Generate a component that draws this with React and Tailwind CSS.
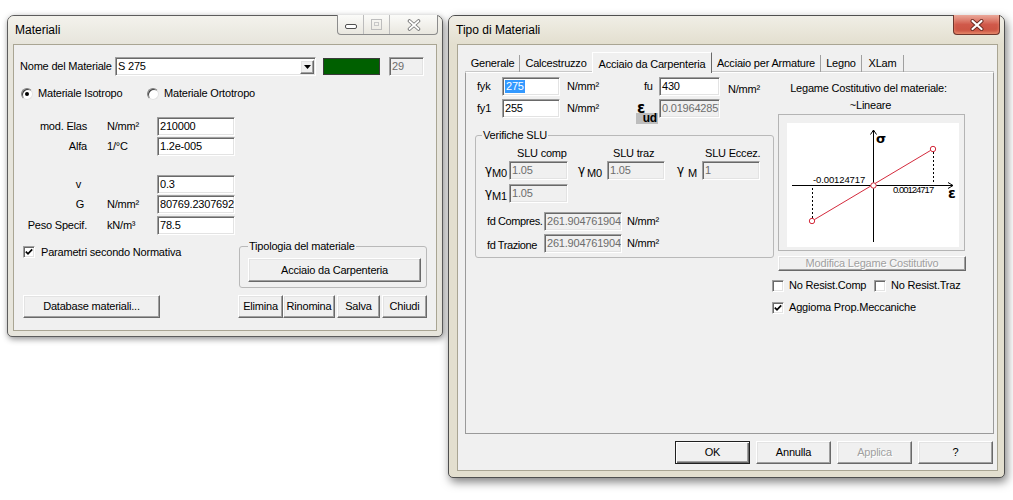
import React from 'react';

const sunken =
  'border border-t-[#a0a0a0] border-l-[#a0a0a0] border-r-[#ffffff] border-b-[#ffffff] shadow-[inset_1px_1px_0_#696969,inset_-1px_-1px_0_#e3e3e3]';
const raised =
  'bg-[#f0f0f0] border border-t-[#ffffff] border-l-[#ffffff] border-r-[#696969] border-b-[#696969] shadow-[inset_-1px_-1px_0_#a0a0a0,inset_1px_1px_0_#e3e3e3]';

function Edit({ className = '', disabled, children }) {
  return (
    <div
      className={`${sunken} ${disabled ? 'bg-[#f0f0f0] text-[#6d6d6d]' : 'bg-white'} flex items-center h-[19px] pl-[2px] overflow-hidden whitespace-nowrap shrink-0 ${className}`}
    >
      {children}
    </div>
  );
}

function Btn({ className = '', disabled, children }) {
  return (
    <div
      className={`${raised} flex items-center justify-center shrink-0 whitespace-nowrap ${disabled ? 'text-[#a0a0a0] [text-shadow:1px_1px_0_#ffffff]' : ''} ${className}`}
    >
      {children}
    </div>
  );
}

function DefaultBtn({ className = '', children }) {
  return (
    <div
      className={`bg-[#f0f0f0] border border-[#202020] shadow-[inset_1px_1px_0_#ffffff,inset_-1px_-1px_0_#696969,inset_-2px_-2px_0_#a0a0a0] flex items-center justify-center shrink-0 ${className}`}
    >
      {children}
    </div>
  );
}

function Check({ checked }) {
  return (
    <div className={`${sunken} bg-white w-[12px] h-[12px] flex items-center justify-center shrink-0`}>
      {checked && (
        <svg width="8" height="8" viewBox="0 0 8 8">
          <path d="M0.8 3.6 L3 5.8 L7.2 1.4" fill="none" stroke="#000" strokeWidth="1.7" />
        </svg>
      )}
    </div>
  );
}

function Radio({ checked }) {
  return (
    <div className="w-[12px] h-[12px] rounded-full border border-t-[#808080] border-l-[#808080] border-r-[#e3e3e3] border-b-[#e3e3e3] bg-white shadow-[inset_1px_1px_0_#404040] flex items-center justify-center shrink-0">
      {checked && <div className="w-[4px] h-[4px] rounded-full bg-black" />}
    </div>
  );
}

function Gamma({ sub, className = '', gap = '' }) {
  return (
    <div className={`flex items-start shrink-0 ${className}`}>
      <span className="text-[12px] leading-[13px] font-['DejaVu_Sans',sans-serif] tracking-normal">γ</span>
      <span className={`translate-y-[3px] leading-[13px] ${gap}`}>{sub}</span>
    </div>
  );
}

function Row({ label, unit, value, className = '', labelPad = '' }) {
  return (
    <div className={`flex items-center h-[19px] ${className}`}>
      <span className={`w-[67px] text-right ${labelPad}`}>{label}</span>
      <span className="w-[70px] pl-[20px]">{unit}</span>
      <Edit className="w-[78px]">{value}</Edit>
    </div>
  );
}

function LeftWindow() {
  return (
    <div className="absolute left-[7px] top-[15px] w-[436px] h-[322px] flex flex-col rounded-t-[7px] rounded-b-[5px] border border-[#5c5c5c] bg-[#e7e5dc] shadow-[1px_2px_6px_rgba(0,0,0,0.45)]">
      <div className="flex h-[28px] pl-[7px] pr-[4px] rounded-t-[6px] bg-linear-to-b from-[#f3f2ec] to-[#e7e5dc]">
        <span className="self-center text-[12px] tracking-normal pt-[1px]">Materiali</span>
        <div className="flex-1" />
        <div className="self-start -mt-px flex h-[20px] border border-t-0 border-[#8c8c8c] rounded-b-[4px] overflow-hidden bg-linear-to-b from-[#fbfbf9] to-[#e9e7df]">
          <div className="w-[26px] flex items-center justify-center border-r border-[#bcbcbc] pt-[4px]">
            <svg width="12" height="6">
              <rect x="0.5" y="0.5" width="11" height="4" rx="1.5" fill="#fff" stroke="#505050" />
            </svg>
          </div>
          <div className="w-[26px] flex items-center justify-center border-r border-[#bcbcbc]">
            <svg width="11" height="11">
              <rect x="0.5" y="0.5" width="10" height="10" fill="none" stroke="#bdbdbd" />
              <rect x="3.5" y="3.5" width="4" height="3" fill="none" stroke="#c8c8c8" />
            </svg>
          </div>
          <div className="w-[47px] flex items-center justify-center">
            <svg width="14" height="12">
              <path d="M2.5 2 L11.5 10 M11.5 2 L2.5 10" stroke="#7a7a7a" strokeWidth="3.6" strokeLinecap="round" />
              <path d="M2.5 2 L11.5 10 M11.5 2 L2.5 10" stroke="#fff" strokeWidth="1.7" strokeLinecap="round" />
            </svg>
          </div>
        </div>
      </div>

      <div className="mx-[5px] h-[287px] border border-[#a9a593] bg-[#f0f0f0] pl-[6px] pt-[12px] flex flex-col">
        <div className="flex items-center h-[19px]">
          <span className="w-[95px]">Nome del Materiale</span>
          <div className={`${sunken} bg-white w-[201px] h-[19px] flex items-center pl-[2px] pr-[1px]`}>
            <span className="flex-1">S 275</span>
            <div className={`${raised} w-[14px] h-[14px] flex items-center justify-center`}>
              <svg width="7" height="4">
                <path d="M0 0 L7 0 L3.5 4 Z" fill="#000" />
              </svg>
            </div>
          </div>
          <div className="ml-[7px] w-[57px] h-[17px] bg-[#006000] border border-[#3a3a3a]" />
          <Edit disabled className="ml-[9px] w-[35px]">
            29
          </Edit>
        </div>

        <div className="flex items-center h-[13px] mt-[11px] pl-[1px]">
          <div className="flex items-center w-[126px] gap-[5px]">
            <Radio checked />
            <span>Materiale Isotropo</span>
          </div>
          <div className="flex items-center gap-[5px]">
            <Radio />
            <span>Materiale Ortotropo</span>
          </div>
        </div>

        <div className="mt-[17px] flex flex-col">
          <Row label="mod. Elas" unit="N/mm²" value="210000" />
          <Row label="Alfa" unit="1/°C" value="1.2e-005" className="mt-[1px]" />
          <Row label="v" unit="" value="0.3" className="mt-[19px]" labelPad="pr-[6px]" />
          <Row label="G" unit="N/mm²" value="80769.2307692" className="mt-[1px]" labelPad="pr-[3px]" />
          <Row label="Peso Specif." unit="kN/m³" value="78.5" className="mt-[2px]" />
        </div>

        <div className="flex mt-[5px]">
          <div className="flex items-start pt-[6px] pl-[3px] w-[219px] shrink-0">
            <Check checked />
            <span className="ml-[6px] leading-[12px]">Parametri secondo Normativa</span>
          </div>
          <fieldset className="w-[188px] border border-[#b9b9b9] rounded-[3px] pl-[8px] pr-[5px] pb-[5px] shrink-0">
            <legend className="px-[1px] leading-[13px]">Tipologia del materiale</legend>
            <Btn className="mt-[5px] w-[173px] h-[24px]">Acciaio da Carpenteria</Btn>
          </fieldset>
        </div>

        <div className="flex mt-[7px] h-[23px]">
          <Btn className="ml-[3px] w-[137px]">Database materiali...</Btn>
          <Btn className="ml-[78px] w-[45px]">Elimina</Btn>
          <Btn className="w-[52px]">Rinomina</Btn>
          <Btn className="ml-[2px] w-[43px]">Salva</Btn>
          <Btn className="ml-[2px] w-[45px]">Chiudi</Btn>
        </div>
      </div>
    </div>
  );
}

function Chart() {
  const red = '#d42a3c';
  return (
    <svg width="172" height="124" className="block">
      <line x1="5" y1="62.5" x2="166" y2="62.5" stroke="#000" />
      <polyline points="161,59.5 166,62.5 161,65.5" fill="none" stroke="#000" />
      <line x1="86.5" y1="7" x2="86.5" y2="119" stroke="#000" />
      <polyline points="83.5,11.5 86.5,7 89.5,11.5" fill="none" stroke="#000" />
      <text x="89" y="20" fontSize="13" fontWeight="bold" fontFamily="DejaVu Sans, sans-serif">
        σ
      </text>
      <text x="161" y="75" fontSize="14" fontWeight="bold" fontFamily="DejaVu Sans, sans-serif">
        ε
      </text>
      <line x1="25.5" y1="65" x2="25.5" y2="96" stroke="#000" strokeDasharray="2 2" />
      <line x1="146.5" y1="29" x2="146.5" y2="60" stroke="#000" strokeDasharray="2 2" />
      <line x1="25" y1="98" x2="146" y2="26" stroke={red} />
      <circle cx="25" cy="98" r="2.7" fill="#fff" stroke={red} />
      <circle cx="86.5" cy="62.5" r="2.7" fill="#fff" stroke={red} />
      <circle cx="146" cy="26" r="2.7" fill="#fff" stroke={red} />
      <text x="26" y="60" fontSize="9.5" textLength="52" fontFamily="Liberation Sans, sans-serif">
        -0.00124717
      </text>
      <text x="106" y="70" fontSize="9.5" textLength="41" fontFamily="Liberation Sans, sans-serif">
        0.00124717
      </text>
    </svg>
  );
}

function RightWindow() {
  return (
    <div className="absolute left-[448px] top-[15px] w-[557px] h-[463px] flex flex-col rounded-t-[7px] rounded-b-[5px] border border-[#4f4f4f] bg-[#e3dfcf] shadow-[2px_4px_10px_rgba(0,0,0,0.5)]">
      <div className="flex h-[28px] pl-[7px] pr-[4px] rounded-t-[6px] bg-linear-to-b from-[#f0eee6] to-[#e3dfcf]">
        <span className="self-center text-[12px] tracking-normal pt-[1px]">Tipo di Materiali</span>
        <div className="flex-1" />
        <div className="self-start -mt-px w-[47px] h-[20px] border border-t-0 border-[#6e362d] rounded-b-[4px] bg-linear-to-b from-[#eaa99b] via-[#d0594a] to-[#c9513f] flex items-center justify-center shadow-[inset_0_-2px_3px_rgba(255,190,150,0.5)]">
          <svg width="14" height="12">
            <path d="M2.5 2 L11.5 10 M11.5 2 L2.5 10" stroke="#6a2a22" strokeWidth="4" strokeLinecap="round" />
            <path d="M2.5 2 L11.5 10 M11.5 2 L2.5 10" stroke="#fff" strokeWidth="2.2" strokeLinecap="round" />
          </svg>
        </div>
      </div>

      <div className="ml-[8px] w-[541px] h-[427px] border border-[#a9a593] bg-[#f0f0f0] flex flex-col">
        <div className="flex items-end ml-[8px] mt-[7px] relative z-10">
          <div className="w-[54px] h-[17px] flex items-center justify-center border-r border-[#a0a0a0]">Generale</div>
          <div className="w-[72px] h-[17px] flex items-center justify-center">Calcestruzzo</div>
          <div className="w-[120px] h-[21px] -mb-px pt-[3px] bg-[#f0f0f0] border-t border-l border-[#ffffff] border-r border-r-[#696969] flex items-center justify-center">
            Acciaio da Carpenteria
          </div>
          <div className="w-[109px] h-[17px] flex items-center justify-center border-r border-[#a0a0a0]">Acciaio per Armature</div>
          <div className="w-[41px] h-[17px] flex items-center justify-center border-r border-[#a0a0a0]">Legno</div>
          <div className="w-[42px] h-[17px] flex items-center justify-center border-r border-[#a0a0a0]">XLam</div>
        </div>

        <div className="ml-[7px] w-[529px] h-[362px] border border-[#9a9a9a] border-t-[#ffffff] shadow-[0_-1px_0_#c8c8c8] flex">
          <div className="w-[306px] shrink-0 flex flex-col">
            <div className="grid grid-cols-[25px_58px_76px_23px_61px_auto] gap-y-[3px] mt-[4px] pl-[11px] items-center">
              <span>fyk</span>
              <Edit className="w-[58px] pl-[1px]">
                <span className="bg-[#3399ff] text-white px-[1px]">275</span>
              </Edit>
              <span className="pl-[7px]">N/mm²</span>
              <span className="pl-[8px]">fu</span>
              <Edit className="w-[61px]">430</Edit>
              <span className="pl-[8px] pt-[5px]">N/mm²</span>

              <span>fy1</span>
              <Edit className="w-[58px]">255</Edit>
              <span className="pl-[7px]">N/mm²</span>
              <div className="relative h-[19px]">
                <span className="absolute left-[1px] top-[4px] text-[15px] leading-[10px] font-bold font-['DejaVu_Sans',sans-serif]">ε</span>
                <span className="absolute left-[0px] top-[14px] w-[22px] h-[11px] bg-[#bdbdbd] text-right pr-[1px] leading-[11px] font-bold text-[12px]">
                  ud
                </span>
              </div>
              <Edit disabled className="w-[61px]">
                0.019642857
              </Edit>
              <span />
            </div>

            <fieldset className="mt-[11px] ml-[9px] w-[299px] h-[129px] border border-[#b9b9b9] rounded-[3px] shrink-0">
              <legend className="ml-[6px] px-[1px] leading-[13px]">Verifiche SLU</legend>
              <div className="flex mt-[5px] h-[13px] items-center">
                <span className="ml-[41px] w-[96px] shrink-0">SLU comp</span>
                <span className="w-[92px] shrink-0">SLU traz</span>
                <span>SLU Eccez.</span>
              </div>
              <div className="flex mt-[1px] h-[19px] items-center">
                <Gamma sub="M0" className="ml-[9px] w-[24px]" />
                <Edit disabled className="w-[59px]">
                  1.05
                </Edit>
                <Gamma sub="M0" className="ml-[10px] w-[29px]" gap="ml-[2px]" />
                <Edit disabled className="w-[58px]">
                  1.05
                </Edit>
                <Gamma sub="M" className="ml-[12px] w-[25px]" gap="ml-[4px]" />
                <Edit disabled className="w-[58px]">
                  1
                </Edit>
              </div>
              <div className="flex mt-[4px] h-[19px] items-center">
                <Gamma sub="M1" className="ml-[9px] w-[24px]" />
                <Edit disabled className="w-[59px]">
                  1.05
                </Edit>
              </div>
              <div className="flex mt-[9px] h-[19px] items-center">
                <span className="ml-[11px] w-[57px] shrink-0 whitespace-nowrap tracking-[-0.4px]">fd Compres.</span>
                <Edit disabled className="w-[78px]">
                  261.904761904
                </Edit>
                <span className="ml-[5px]">N/mm²</span>
              </div>
              <div className="flex mt-[3px] h-[19px] items-center">
                <span className="ml-[11px] w-[57px] shrink-0 whitespace-nowrap tracking-[-0.4px] pt-[3px]">fd Trazione</span>
                <Edit disabled className="w-[78px]">
                  261.904761904
                </Edit>
                <span className="ml-[5px]">N/mm²</span>
              </div>
            </fieldset>
          </div>

          <div className="flex flex-col w-[195px] -ml-px pt-[9px]">
            <div className="text-center">Legame Costitutivo del materiale:</div>
            <div className="text-center mt-[4px] pl-[4px]">~Lineare</div>
            <div className="mt-[2px] ml-[7px] w-[187px] h-[137px] border border-[#b4b4b4] pl-[8px] pt-[8px]">
              <div className="w-[172px] h-[124px] bg-white">
                <Chart />
              </div>
            </div>
            <Btn disabled className="mt-[5px] ml-[7px] w-[188px] h-[15px]">
              Modifica Legame Costitutivo
            </Btn>
            <div className="flex items-center mt-[8px] h-[13px] pl-[1px]">
              <div className="flex items-center w-[102px] shrink-0">
                <Check />
                <span className="ml-[5px]">No Resist.Comp</span>
              </div>
              <div className="flex items-center">
                <Check />
                <span className="ml-[5px]">No Resist.Traz</span>
              </div>
            </div>
            <div className="flex items-center mt-[9px] h-[13px] pl-[1px]">
              <Check checked />
              <span className="ml-[5px]">Aggioma Prop.Meccaniche</span>
            </div>
          </div>
        </div>

        <div className="flex justify-end gap-[6px] ml-[7px] w-[529px] mt-[7px] pr-[1px]">
          <DefaultBtn className="w-[75px] h-[23px]">OK</DefaultBtn>
          <Btn className="w-[75px] h-[23px]">Annulla</Btn>
          <Btn disabled className="w-[75px] h-[23px]">
            Applica
          </Btn>
          <Btn className="w-[75px] h-[23px]">?</Btn>
        </div>
      </div>
    </div>
  );
}

export default function App() {
  return (
    <div className="relative w-[1013px] h-[500px] bg-white overflow-hidden whitespace-nowrap font-['Liberation_Sans',Arial,sans-serif] text-[11px] leading-[13px] tracking-[-0.2px] text-black">
      <LeftWindow />
      <RightWindow />
    </div>
  );
}
